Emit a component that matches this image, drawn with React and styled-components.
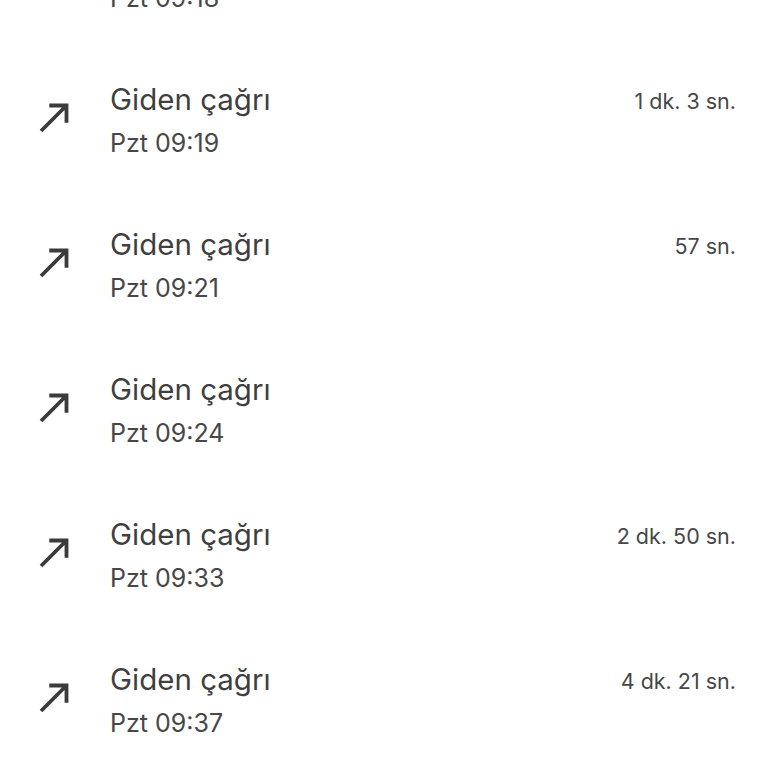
import React from "react";
import styled, { createGlobalStyle } from "styled-components";

const GlobalStyle = createGlobalStyle`
  html, body {
    margin: 0;
    padding: 0;
    background: #ffffff;
    overflow: hidden;
  }
  body {
    font-family: Inter, Roboto, "Noto Sans", "Liberation Sans", sans-serif;
  }
`;

const CallList = styled.div`
  display: flex;
  flex-direction: column;
  margin-top: -88px;
`;

const CallRow = styled.div`
  display: grid;
  grid-template-columns: 110px 1fr auto;
  align-items: start;
  height: 145px;
  box-sizing: border-box;
  padding: 24px 32px 0 0;
`;

const IconCell = styled.div`
  padding-left: 32px;
  margin-top: 13px;
  width: 46px;
  height: 46px;
  color: #3b3b3b;

  svg {
    display: block;
    width: 46px;
    height: 46px;
  }
`;

const TextBlock = styled.div`
  display: flex;
  flex-direction: column;
`;

const Title = styled.div`
  font-size: 29.5px;
  line-height: 36px;
  color: #3f3f3f;
`;

const Subtitle = styled.div`
  font-size: 25px;
  line-height: 34px;
  margin-top: 9px;
  color: #474747;
`;

const Duration = styled.div`
  font-size: 21.5px;
  line-height: 36px;
  margin-top: 2px;
  color: #474747;
`;

const OutgoingIcon = () => (
  <svg viewBox="0 0 24 24" fill="currentColor">
    <path d="M9 5v2h6.59L4 18.59 5.41 20 17 8.41V15h2V5z" />
  </svg>
);

const calls = [
  { time: "Pzt 09:18", duration: "" },
  { time: "Pzt 09:19", duration: "1 dk. 3 sn." },
  { time: "Pzt 09:21", duration: "57 sn." },
  { time: "Pzt 09:24", duration: "" },
  { time: "Pzt 09:33", duration: "2 dk. 50 sn." },
  { time: "Pzt 09:37", duration: "4 dk. 21 sn." },
];

export default function App() {
  return (
    <>
      <GlobalStyle />
      <CallList>
        {calls.map((call) => (
          <CallRow key={call.time}>
            <IconCell>
              <OutgoingIcon />
            </IconCell>
            <TextBlock>
              <Title>Giden çağrı</Title>
              <Subtitle>{call.time}</Subtitle>
            </TextBlock>
            <Duration>{call.duration}</Duration>
          </CallRow>
        ))}
      </CallList>
    </>
  );
}
